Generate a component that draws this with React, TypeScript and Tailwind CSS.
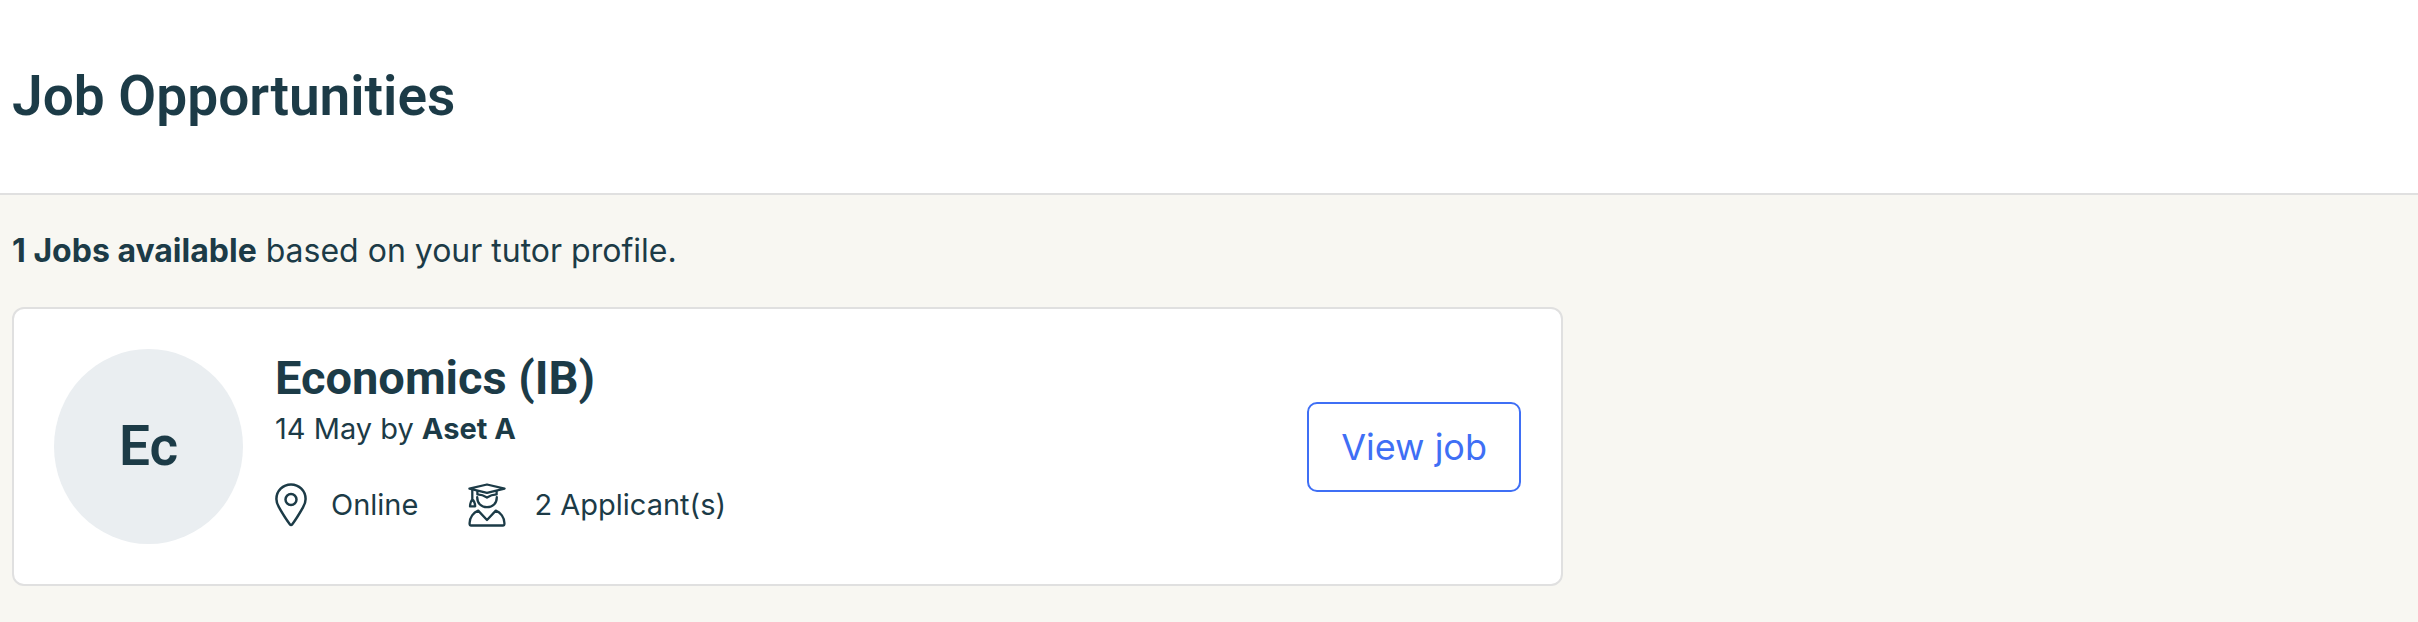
function PinIcon() {
  return (
    <svg viewBox="0 0 32 44" className="h-11 w-8 shrink-0" fill="none" stroke="currentColor" strokeWidth="2.5" strokeLinejoin="round" aria-hidden="true">
      <path d="M16 1.4C7.9 1.4 1.4 7.9 1.4 16c0 3 1 5.6 2.5 8.2 3.2 5.6 6.7 11.6 11.1 17.2.6.8 1.500.8 2.100 0 4.400-5.600 7.800-11.600 11-17.200 1.500-2.600 2.500-5.200 2.500-8.200C30.600 7.900 24.100 1.400 16 1.400Z" />
      <circle cx="16" cy="16.500" r="5.500" />
    </svg>
  );
}

function GraduateIcon() {
  return (
    <svg viewBox="0 0 38 44" className="h-11 w-[38px] shrink-0" fill="none" stroke="currentColor" strokeWidth="2.3" strokeLinejoin="round" strokeLinecap="round" aria-hidden="true">
      <path d="M1.400 5.600 19 1.500l17.600 4.100L19 9.800 1.400 5.600Z" />
      <path d="M4.300 6.800v10M4.300 16.500c-1.200 1.200-2 3.700-2.300 6.800h5.200c-.2-3.100-1.300-5.600-2.900-6.800Z" />
      <path d="M9.400 8.200v3.200c3.700.2 6.800 1.300 9.600 3.100 2.800-1.800 5.900-2.900 9.600-3.100V8.200" />
      <path d="M9.200 14.200c0 6 4 10 9.800 10s9.800-4 9.800-10" />
      <path d="M10.200 27.600 19 37l8.800-9.400c4.700 1.700 8.600 6.700 8.600 12.400v1.300c0 .7-.5 1.200-1.200 1.200H2.800c-.7 0-1.200-.5-1.200-1.200V40c0-5.700 3.900-10.700 8.600-12.400Z" />
    </svg>
  );
}

export default function App() {
  return (
    <div className="min-h-screen bg-[#f8f7f2] font-['Inter',sans-serif] text-[#1c3b47]">
      <header className="border-b-2 border-[#e0e0e0] bg-white px-3 pt-16 pb-[65px]">
        <h1 className="font-['Roboto',sans-serif] text-[55px] leading-16 font-semibold">Job Opportunities</h1>
      </header>
      <main className="px-3 pt-9 pb-9">
        <p className="text-[32px] leading-10">
          <strong className="font-bold">1 Jobs available</strong> based on your tutor profile.
        </p>
        <article className="mt-9 flex max-w-[1551px] items-center rounded-xl border-2 border-[#e0e0e0] bg-white p-10">
          <div className="flex h-[195px] w-[189px] shrink-0 items-center justify-center rounded-[50%] bg-[#eaeef1] font-['Roboto',sans-serif] text-[55px] font-semibold">
            Ec
          </div>
          <div className="ml-8 flex-1 self-start">
            <h2 className="font-['Roboto',sans-serif] text-[47px] leading-[58px] font-bold">Economics (IB)</h2>
            <p className="text-[29px] leading-11">
              14 May by <strong className="font-bold">Aset A</strong>
            </p>
            <ul className="mt-8 flex items-center text-[29px] leading-11">
              <li className="flex items-center gap-6">
                <PinIcon />
                Online
              </li>
              <li className="ml-[50px] flex items-center gap-7">
                <GraduateIcon />
                2 Applicant(s)
              </li>
            </ul>
          </div>
          <button type="button" className="rounded-[10px] border-2 border-[#3f6ff5] px-8 py-4 text-[36px] leading-[54px] text-[#3f6ff5]">
            View job
          </button>
        </article>
      </main>
    </div>
  );
}
